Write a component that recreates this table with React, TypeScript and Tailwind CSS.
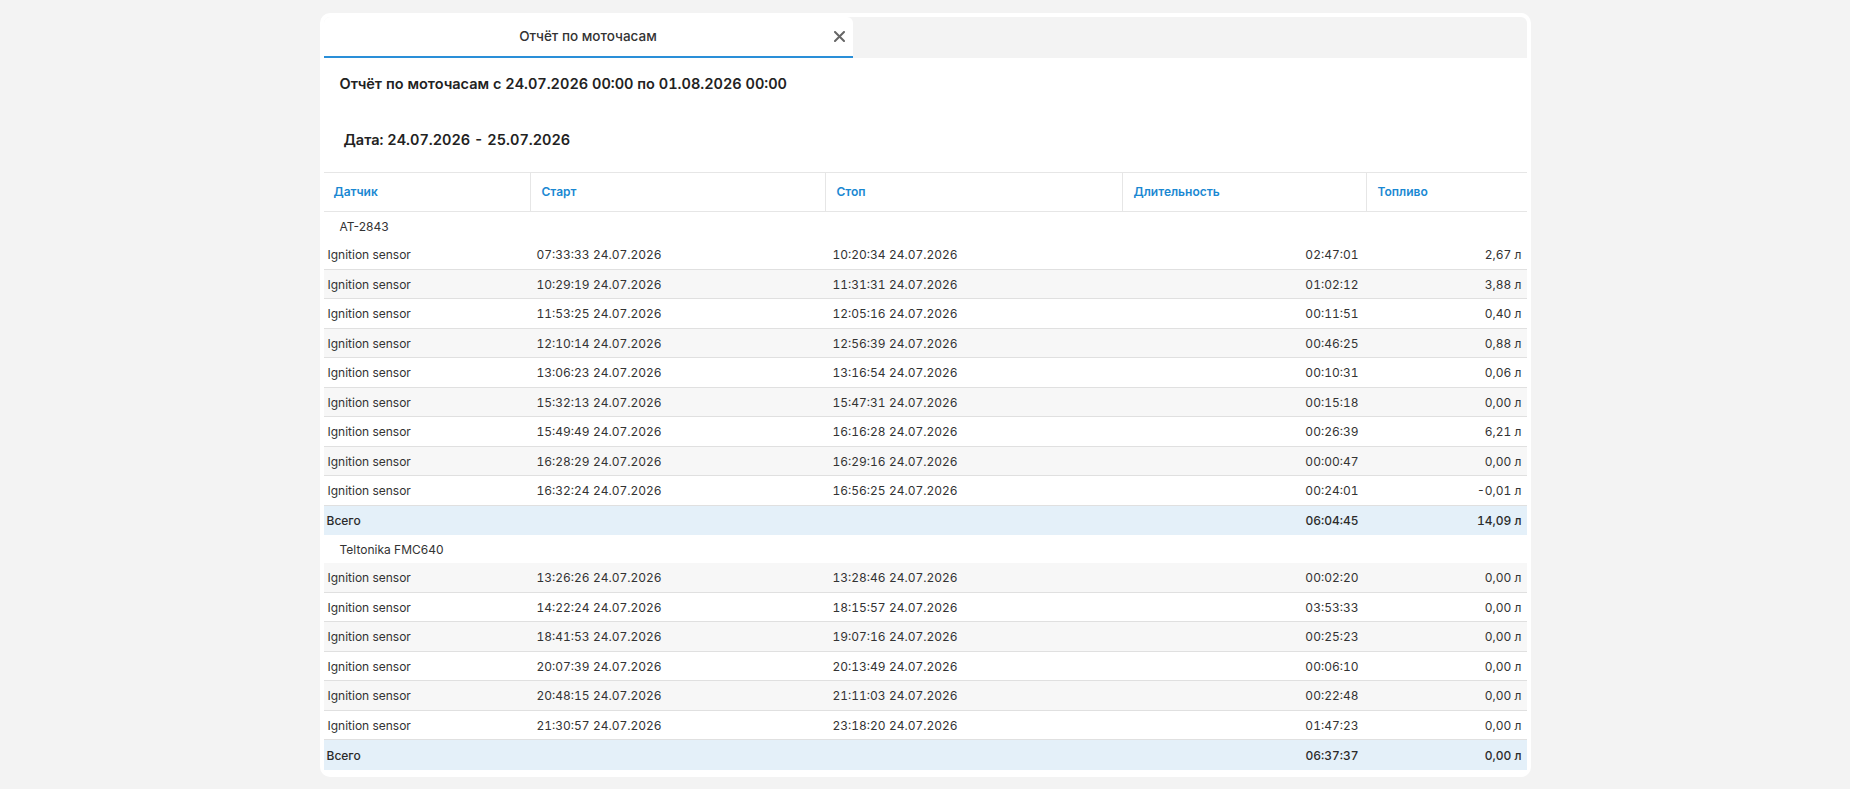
type Row = { start: string; stop: string; dur: string; fuel: string };

type Group = { name: string; rows: Row[]; totalDur: string; totalFuel: string };

const DATE = "24.07.2026";

const groups: Group[] = [
  {
    name: "AT-2843",
    rows: [
      { start: "07:33:33", stop: "10:20:34", dur: "02:47:01", fuel: "2,67" },
      { start: "10:29:19", stop: "11:31:31", dur: "01:02:12", fuel: "3,88" },
      { start: "11:53:25", stop: "12:05:16", dur: "00:11:51", fuel: "0,40" },
      { start: "12:10:14", stop: "12:56:39", dur: "00:46:25", fuel: "0,88" },
      { start: "13:06:23", stop: "13:16:54", dur: "00:10:31", fuel: "0,06" },
      { start: "15:32:13", stop: "15:47:31", dur: "00:15:18", fuel: "0,00" },
      { start: "15:49:49", stop: "16:16:28", dur: "00:26:39", fuel: "6,21" },
      { start: "16:28:29", stop: "16:29:16", dur: "00:00:47", fuel: "0,00" },
      { start: "16:32:24", stop: "16:56:25", dur: "00:24:01", fuel: "-0,01" },
    ],
    totalDur: "06:04:45",
    totalFuel: "14,09",
  },
  {
    name: "Teltonika FMC640",
    rows: [
      { start: "13:26:26", stop: "13:28:46", dur: "00:02:20", fuel: "0,00" },
      { start: "14:22:24", stop: "18:15:57", dur: "03:53:33", fuel: "0,00" },
      { start: "18:41:53", stop: "19:07:16", dur: "00:25:23", fuel: "0,00" },
      { start: "20:07:39", stop: "20:13:49", dur: "00:06:10", fuel: "0,00" },
      { start: "20:48:15", stop: "21:11:03", dur: "00:22:48", fuel: "0,00" },
      { start: "21:30:57", stop: "23:18:20", dur: "01:47:23", fuel: "0,00" },
    ],
    totalDur: "06:37:37",
    totalFuel: "0,00",
  },
];

const COLS = "grid grid-cols-[207px_295px_297px_244px_1fr]";

function HeaderRow() {
  const headers = ["Датчик", "Старт", "Стоп", "Длительность", "Топливо"];
  return (
    <div className={`${COLS} h-[40px] border-y border-[#e6e6e6]`}>
      {headers.map((h, i) => (
        <div
          key={h}
          className={`flex items-center text-[12px] font-semibold text-[#1a88d2] ${
            i === 0 ? "pl-[10px]" : "pl-[11px]"
          } ${i < headers.length - 1 ? "border-r border-[#e6e6e6]" : ""}`}
        >
          {h}
        </div>
      ))}
    </div>
  );
}

function DataRow({ row, grey }: { row: Row; grey: boolean }) {
  return (
    <div
      className={`${COLS} h-[29.5px] items-center border-b border-[#e0e0e0] pt-[2px] text-[12px] tabular-nums text-[#333] ${
        grey ? "bg-[#f7f7f7]" : "bg-white"
      }`}
    >
      <div className="pl-[4px]">Ignition sensor</div>
      <div className="pl-[6px]">
        {row.start} {DATE}
      </div>
      <div className="pl-[7px]">
        {row.stop} {DATE}
      </div>
      <div className="pr-[8px] text-right">{row.dur}</div>
      <div className="pr-[5px] text-right">{row.fuel} л</div>
    </div>
  );
}

function TotalRow({ dur, fuel }: { dur: string; fuel: string }) {
  return (
    <div className={`${COLS} h-[29.5px] items-center bg-[#e4f0f9] pt-[2px] text-[12px] font-medium tabular-nums text-[#2b2b2b]`}>
      <div className="pl-[3px]">Всего</div>
      <div />
      <div />
      <div className="pr-[8px] text-right">{dur}</div>
      <div className="pr-[5px] text-right">{fuel} л</div>
    </div>
  );
}

export default function App() {
  // position inside tbody, 1-based, to reproduce the odd/even striping
  let pos = 0;

  return (
    <div className="min-h-screen bg-[#f3f3f3] py-[13px] font-['Inter',sans-serif] text-[#333]">
      <div className="mx-auto w-[1211px] rounded-[10px] bg-white px-[4px] pt-[4px] pb-[7px]">
        {/* tabs */}
        <div className="flex h-[41px] rounded-t-[6px] bg-[#f3f3f3]">
          <div className="grid w-[529px] grid-cols-[26px_1fr_26px] items-center rounded-t-[6px] border-b-2 border-[#2a8fd8] bg-white">
            <div />
            <span className="text-center text-[13.5px] font-medium text-[#333]">Отчёт по моточасам</span>
            <button className="flex h-full items-center justify-center text-[#666]">
              <svg width="11" height="11" viewBox="0 0 11 11" fill="none">
                <path d="M1 1L10 10M10 1L1 10" stroke="currentColor" strokeWidth="2" strokeLinecap="round" />
              </svg>
            </button>
          </div>
        </div>

        <div className="mt-[16px] pl-[16px] text-[14.5px] font-semibold leading-[20px] tabular-nums text-[#222]">
          Отчёт по моточасам с 24.07.2026 00:00 по 01.08.2026 00:00
        </div>
        <div className="mt-[36px] pl-[20px] text-[14.5px] font-semibold leading-[20px] tabular-nums text-[#222]">
          Дата: 24.07.2026 - 25.07.2026
        </div>

        <div className="mt-[22px]">
          <HeaderRow />
          {groups.map((g) => {
            pos += 1;
            const groupRow = (
              <div key={g.name + "-head"} className="flex h-[28px] items-center bg-white pl-[16px] pt-[1px] text-[12px] text-[#333]">
                {g.name}
              </div>
            );
            const dataRows = g.rows.map((r) => {
              pos += 1;
              return <DataRow key={g.name + r.start} row={r} grey={pos % 2 === 1} />;
            });
            pos += 1;
            return (
              <div key={g.name}>
                {groupRow}
                {dataRows}
                <TotalRow dur={g.totalDur} fuel={g.totalFuel} />
              </div>
            );
          })}
        </div>
      </div>
    </div>
  );
}
